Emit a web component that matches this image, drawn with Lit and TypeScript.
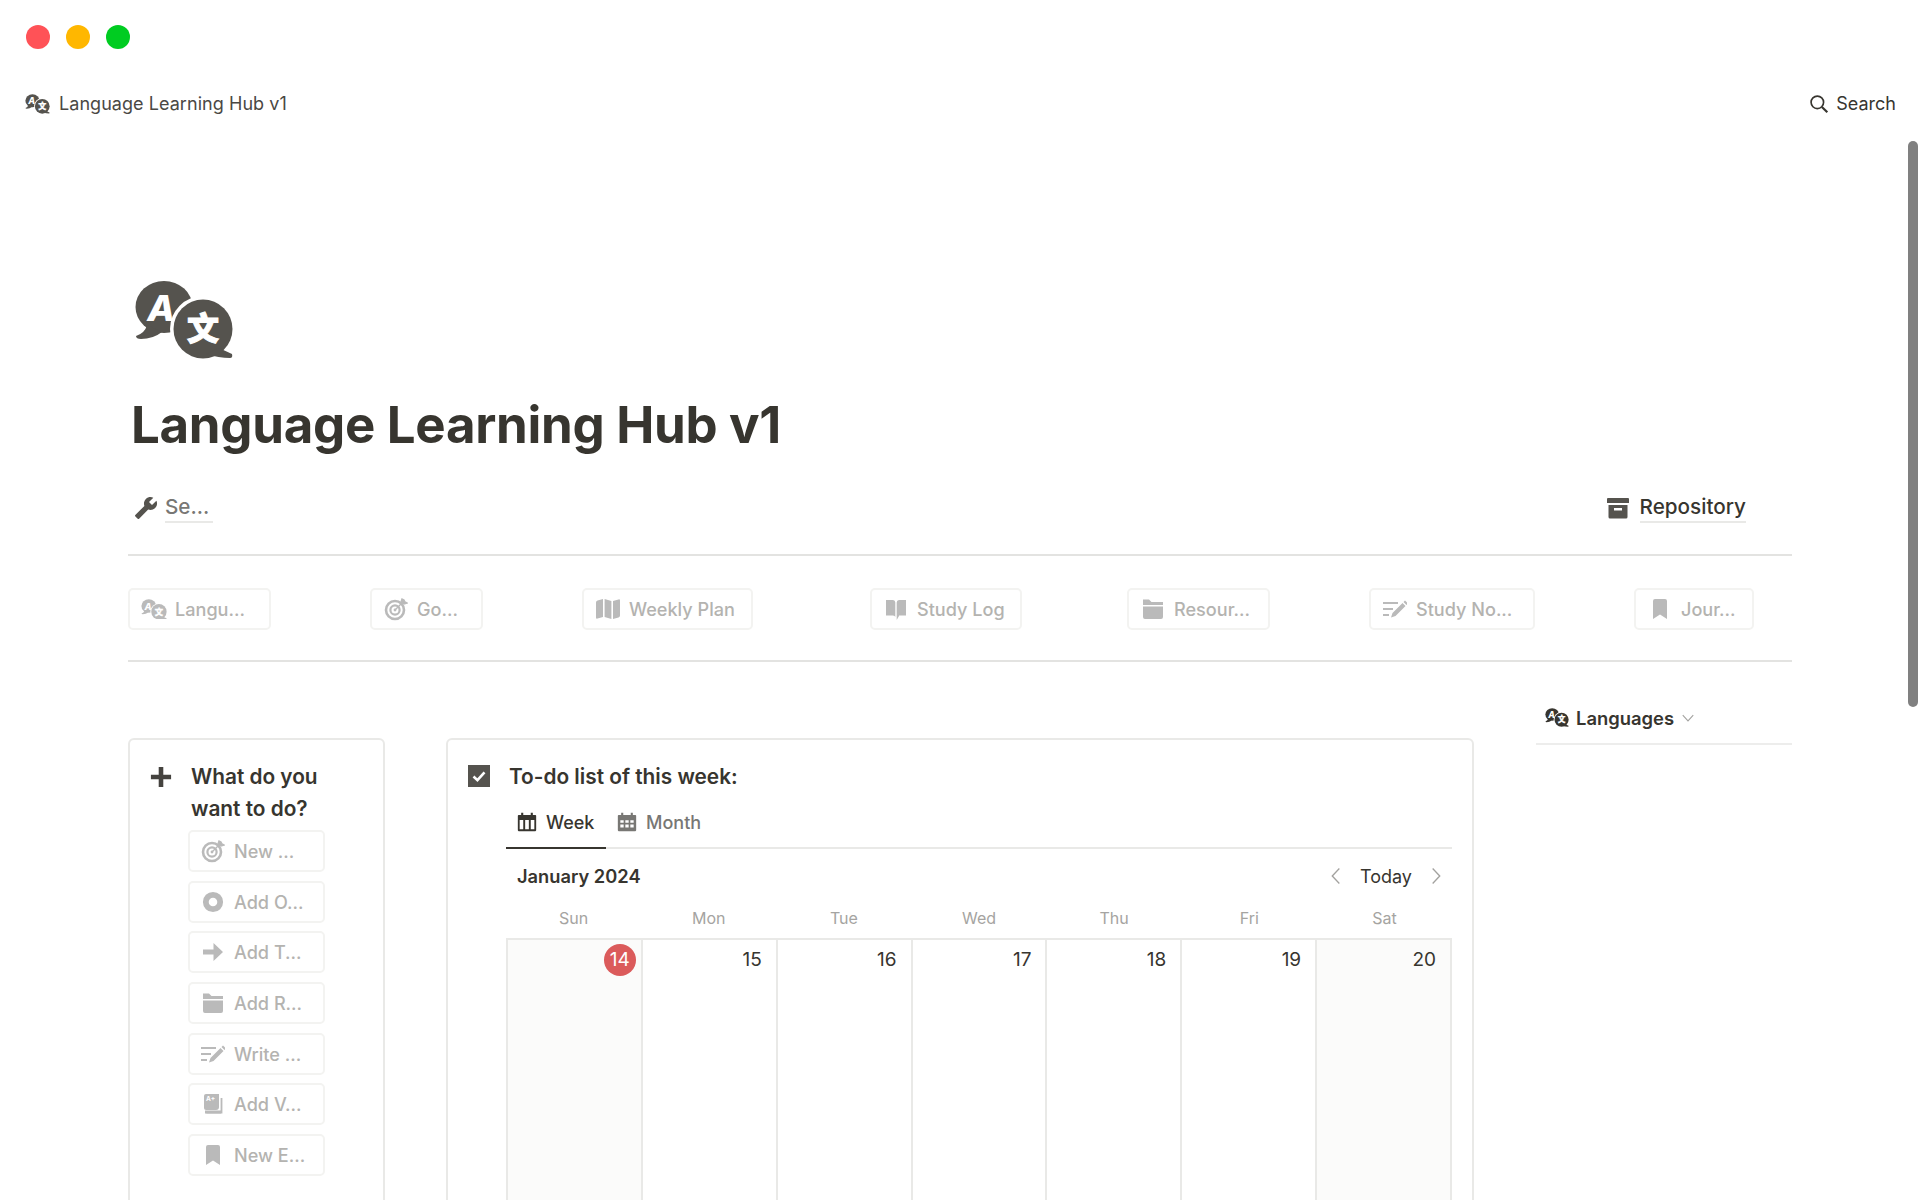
import { html, svg, LitElement, css } from "lit";
import { customElement } from "lit/decorators.js";

const icons: Record<string, unknown> = {
  target: svg`<circle cx="11" cy="13" r="9" fill="none" stroke="currentColor" stroke-width="2.6"/><circle cx="11" cy="13" r="4.6" fill="none" stroke="currentColor" stroke-width="2.2"/><circle cx="11" cy="13" r="1.4" fill="currentColor"/><path d="M11 13 19 5M17 5l1-3 2 1 1 2 2 1-3 1z" fill="currentColor" stroke="currentColor" stroke-width="1.4"/>`,
  map: svg`<path d="M0 5.5Q0 4 1.5 3.6L7 2V20L1.5 21.6Q0 22 0 20.5ZM8.6 2 15.4 4V22L8.6 20ZM17 4 22.5 2.4Q24 2 24 3.5V18.500Q24 20 22.500 20.400L17 22Z" fill="currentColor"/>`,
  book: svg`<path d="M2 3H9Q11.300 3 11.300 5.500V20Q11 18.500 9 18.500H2ZM22 3H15Q12.700 3 12.700 5.500V23L15 19V18.500H22Z" fill="currentColor"/>`,
  folder: svg`<path d="M2 2.500H8L10.500 5H22V8H2ZM2 9.500H22V20Q22 22 20 22H4Q2 22 2 20Z" fill="currentColor"/>`,
  edit: svg`<path d="M0 6H15M0 12H10M0 18H6" fill="none" stroke="currentColor" stroke-width="2"/><path d="M8 20.500 9.500 16 19.500 6 22.500 9 12.500 19ZM20.500 5 22 3.500 25 6.500 23.500 8Z" fill="currentColor"/>`,
  bookmark: svg`<path d="M5 4Q5 2 7 2H17Q19 2 19 4V22L12 17.500 5 22Z" fill="currentColor"/>`,
  ring: svg`<circle cx="12" cy="12" r="7.200" fill="none" stroke="currentColor" stroke-width="5.800"/>`,
  arrow: svg`<path d="M2 9.500H12.500V3L22 12 12.500 21V14.500H2Z" fill="currentColor"/>`,
  vocab: svg`<path d="M3 4Q3 2 5 2H18V15Q18 18 15 18H5Q3 18 3 16Z" fill="currentColor"/><text x="5" y="9" font-family="Inter, sans-serif" font-size="6.500" font-weight="700" fill="#fff">A+</text><path d="M20.500 6V20.500H4" fill="none" stroke="currentColor" stroke-width="1.800"/><path d="M4 18.500H20V21.500H6Q4 21.500 4 19.500Z" fill="currentColor"/>`,
  week: svg`<path d="M5 1H7.500V3.500H16.500V1H19V3.500H22Q23 3.500 23 4.500V22Q23 23 22 23H2Q1 23 1 22V4.500Q1 3.500 2 3.500H5ZM3.200 9.500V20.800H7.500V9.500ZM9.800 9.500V20.800H14.200V9.500ZM16.500 9.500V20.800H20.800V9.500Z" fill="currentColor" fill-rule="evenodd"/>`,
  month: svg`<path d="M5 1H7.500V3.500H16.500V1H19V3.500H22Q23 3.500 23 4.500V22Q23 23 22 23H2Q1 23 1 22V4.500Q1 3.500 2 3.500H5ZM4 10V13H8V10ZM10 10V13H14V10ZM16 10V13H20V10ZM4 15V18.500H8V15ZM10 15V18.500H14V15ZM16 15V18.500H20V15Z" fill="currentColor" fill-rule="evenodd"/>`,
  archive: svg`<path d="M1 3Q1 2 2 2H22Q23 2 23 3V7H1ZM2.500 9H21.500V21Q21.500 22.500 20 22.500H4Q2.500 22.500 2.500 21ZM8 12V14.500H16V12Z" fill="currentColor" fill-rule="evenodd"/>`,
  wrench: svg`<path transform="matrix(-1 0 0 1 24 0)" d="M22.700 19l-9.100-9.100c.9-2.300.4-5-1.500-6.900-2-2-5-2.400-7.400-1.300L9 6 6 9 1.600 4.700C.4 7.100.9 10.100 2.900 12.100c1.900 1.900 4.600 2.400 6.900 1.500l9.100 9.100c.4.400 1 .4 1.400 0l2.300-2.300c.5-.4.500-1.100.1-1.400z" fill="currentColor"/>`,
  search: svg`<circle cx="10" cy="10" r="7.500" fill="none" stroke="currentColor" stroke-width="2"/><path d="M15.500 15.500 22 22" fill="none" stroke="currentColor" stroke-width="2.600"/>`,
  plus: svg`<path d="M9.500 1H14.500V9.500H23V14.500H14.500V23H9.500V14.500H1V9.500H9.500Z" fill="currentColor"/>`,
  check: svg`<rect width="24" height="24" fill="#55534e"/><path d="M6 12.500 10.300 16.500 18 8" fill="none" stroke="#fff" stroke-width="2.800"/>`,
  left: svg`<path d="M16 3 7.500 12 16 21" fill="none" stroke="currentColor" stroke-width="1.600"/>`,
  right: svg`<path d="M8 3 16.500 12 8 21" fill="none" stroke="currentColor" stroke-width="1.600"/>`,
  down: svg`<path d="M3 7 12 17 21 7" fill="none" stroke="currentColor" stroke-width="1.800"/>`,
};

// two speech bubbles, used from 24px up to the 100px page icon
const langIcon = svg`
  <ellipse cx="30" cy="27" rx="28.500" ry="26" fill="currentColor"/>
  <path d="M13 45Q11 53 2 56Q2 59 7 59Q19 59 28 52Z" fill="currentColor"/>
  <text x="27" y="41" text-anchor="middle" font-family="Inter, sans-serif" font-size="36" font-weight="800" font-style="italic" fill="#fff">A</text>
  <circle cx="69" cy="49" r="33" fill="#fff"/>
  <circle cx="69" cy="49" r="29.500" fill="currentColor"/>
  <path d="M85 68 98 74Q99 78 96 78Q85 78 72 74Z" fill="currentColor"/>
  <text x="69" y="60" text-anchor="middle" font-family="'Noto Sans CJK SC', sans-serif" font-size="32" font-weight="900" fill="#fff" stroke="#fff" stroke-width="1">文</text>`;

const nav = [
  { icon: "lang", label: "Langu...", width: 143 },
  { icon: "target", label: "Go...", width: 113 },
  { icon: "map", label: "Weekly Plan", width: 171 },
  { icon: "book", label: "Study Log", width: 152 },
  { icon: "folder", label: "Resour...", width: 143 },
  { icon: "edit", label: "Study No...", width: 166 },
  { icon: "bookmark", label: "Jour...", width: 120 },
];

const actions = [
  { icon: "target", label: "New ..." },
  { icon: "ring", label: "Add O..." },
  { icon: "arrow", label: "Add T..." },
  { icon: "folder", label: "Add R..." },
  { icon: "edit", label: "Write ..." },
  { icon: "vocab", label: "Add V..." },
  { icon: "bookmark", label: "New E..." },
];

const days = [
  { name: "Sun", date: 14, today: true, weekend: true },
  { name: "Mon", date: 15 },
  { name: "Tue", date: 16 },
  { name: "Wed", date: 17 },
  { name: "Thu", date: 18 },
  { name: "Fri", date: 19 },
  { name: "Sat", date: 20, weekend: true },
];

@customElement("app-root")
export class AppRoot extends LitElement {
  static styles = css`
    :host {
      display: block;
      position: relative;
      height: 1200px;
      overflow: hidden;
      background: #fff;
      color: #37352f;
      font-family: Inter, "Noto Sans", sans-serif;
    }

    svg {
      display: block;
      flex: none;
    }

    .titlebar {
      display: flex;
      align-items: center;
      gap: 16px;
      height: 74px;
      padding-left: 26px;
    }

    .dot {
      width: 24px;
      height: 24px;
      border-radius: 50%;
    }

    .red {
      background: #ff5257;
    }

    .amber {
      background: #ffb700;
    }

    .green {
      background: #00cc21;
    }

    .topbar {
      display: flex;
      align-items: center;
      justify-content: space-between;
      height: 60px;
      padding: 0 24px 0 25px;
      font-size: 18px;
      line-height: 24px;
    }

    .crumb,
    .search {
      display: flex;
      align-items: center;
    }

    .crumb {
      gap: 9px;
      color: #4a4844;
      letter-spacing: 0.05px;
    }

    .crumb svg {
      color: #55534e;
    }

    .search {
      gap: 7px;
      color: #37352f;
    }

    .page {
      padding: 146px 128px 0;
    }

    .page-icon {
      margin-left: 6px;
      color: #55534e;
    }

    h1 {
      margin: 34px 0 0 3px;
      font-size: 51px;
      line-height: 62px;
      font-weight: 700;
      letter-spacing: -0.3px;
    }

    .links {
      display: flex;
      align-items: center;
      justify-content: space-between;
      height: 40px;
      margin-top: 32px;
      padding: 0 46px 0 6px;
      font-size: 20.7px;
      font-weight: 500;
    }

    .link {
      display: flex;
      align-items: center;
      gap: 7px;
      color: #55534e;
    }

    .link span {
      padding-bottom: 1px;
      border-bottom: 2px solid #e9e9e7;
      line-height: 26px;
    }

    .link .muted {
      width: 48px;
      color: #787774;
    }

    .link .dark {
      color: #37352f;
    }

    .link.repo {
      gap: 10px;
    }

    hr {
      height: 2px;
      margin: 26px 0 0;
      border: 0;
      background: #e3e3e1;
    }

    .nav {
      display: grid;
      grid-template-columns: 242px 212px 288px 257px 242px 265px 120px;
      margin-top: 32px;
    }

    .btn {
      display: flex;
      align-items: center;
      box-sizing: border-box;
      height: 42px;
      padding-left: 11px;
      border: 2px solid #f3f3f1;
      border-radius: 5px;
      color: #b4b3b0;
      font-size: 18.1px;
      font-weight: 500;
      white-space: nowrap;
    }

    .btn .slot {
      display: flex;
      justify-content: center;
      flex: none;
      width: 26px;
      margin-right: 8px;
      color: #bababa;
    }

    .nav + hr {
      margin-top: 30px;
    }

    .main {
      display: flex;
      align-items: flex-start;
      margin-top: 38px;
    }

    .card {
      box-sizing: border-box;
      margin-top: 38px;
      border: 2px solid #e9e9e7;
      border-radius: 6px;
    }

    .actions-card {
      flex: none;
      width: 257px;
      padding: 21px 0 50px;
    }

    .card-head {
      display: flex;
      align-items: flex-start;
      font-size: 20.8px;
      line-height: 32px;
      font-weight: 600;
    }

    .actions-card .card-head {
      gap: 19px;
      padding-left: 20px;
    }

    .actions-card .card-head svg {
      margin-top: 5px;
      color: #45433f;
    }

    .actions {
      display: flex;
      flex-direction: column;
      gap: 8.7px;
      width: 137px;
      margin: 5px 0 0 58px;
    }

    .actions .btn {
      padding-left: 10px;
    }

    .week-card {
      flex: none;
      width: 1028px;
      margin-left: 61px;
      padding: 21px 20px 0 20px;
    }

    .week-card .card-head {
      gap: 19px;
    }

    .week-card .card-head svg {
      margin-top: 4px;
    }

    .cal {
      margin: 4px 0 0 38px;
    }

    .tabs {
      display: flex;
      height: 50px;
      border-bottom: 2px solid #e9e9e7;
    }

    .tab {
      display: flex;
      align-items: center;
      gap: 9px;
      box-sizing: border-box;
      height: 52px;
      padding: 0 11px 2px;
      font-size: 18px;
      font-weight: 500;
      color: #787774;
    }

    .tab.on {
      width: 100px;
      padding-bottom: 0;
      border-bottom: 2px solid #37352f;
      color: #37352f;
    }

    .cal-head {
      display: flex;
      align-items: center;
      justify-content: space-between;
      height: 44px;
      margin-top: 5px;
      padding: 0 6px 0 11px;
      font-size: 18.3px;
    }

    .cal-head strong {
      font-weight: 600;
    }

    .pager {
      display: flex;
      align-items: center;
      gap: 14px;
      font-size: 18px;
      font-weight: 400;
      color: #37352f;
    }

    .pager svg {
      color: #a3a29f;
    }

    .names,
    .cells {
      display: grid;
      grid-template-columns: repeat(7, 1fr);
    }

    .names {
      height: 40px;
      align-items: center;
      text-align: center;
      font-size: 16px;
      color: #a5a4a1;
    }

    .cells {
      height: 320px;
      border-top: 2px solid #e9e9e7;
      border-left: 2px solid #e9e9e7;
    }

    .cell {
      display: flex;
      justify-content: flex-end;
      box-sizing: border-box;
      padding: 4px 14px 0 0;
      border-right: 2px solid #e9e9e7;
      font-size: 19px;
      line-height: 32px;
      color: #37352f;
    }

    .cell.weekend {
      background: #fbfbfa;
    }

    .today {
      width: 32px;
      height: 32px;
      margin-right: -9px;
      border-radius: 50%;
      background: #db5b5b;
      color: #fff;
      text-align: center;
    }

    .side {
      flex: none;
      box-sizing: border-box;
      width: 256px;
      margin-left: auto;
      padding: 0 0 7px 9px;
      border-bottom: 2px solid #ededec;
    }

    .side-tab {
      display: flex;
      align-items: center;
      height: 36px;
      font-size: 18.4px;
      font-weight: 600;
    }

    .side-tab .lang {
      margin-right: 7px;
      color: #37352f;
    }

    .side-tab .chev {
      margin-left: 7px;
      color: #a3a29f;
    }

    .scrollbar {
      position: absolute;
      top: 141px;
      left: 1908px;
      width: 10px;
      height: 566px;
      border-radius: 5px;
      background: #808080;
    }
  `;

  icon(name: string, size = 24) {
    if (name === "lang") {
      return html`<svg width=${size} height=${size * 0.8} viewBox="0 0 100 80">${langIcon}</svg>`;
    }
    return html`<svg width=${size} height=${size} viewBox="0 0 24 24">${icons[name]}</svg>`;
  }

  button(item: { icon: string; label: string; width?: number }) {
    const size = item.icon === "lang" ? 26 : 24;
    return html`<div class="btn" style=${item.width ? `width:${item.width}px` : ""}>
      <span class="slot">${this.icon(item.icon, size)}</span>${item.label}
    </div>`;
  }

  render() {
    return html`
      <div class="titlebar">
        <span class="dot red"></span>
        <span class="dot amber"></span>
        <span class="dot green"></span>
      </div>
      <div class="topbar">
        <div class="crumb">${this.icon("lang", 25)}Language Learning Hub v1</div>
        <div class="search">${this.icon("search", 20)}Search</div>
      </div>

      <div class="page">
        <div class="page-icon">
          <svg width="100" height="80" viewBox="0 0 100 80">${langIcon}</svg>
        </div>
        <h1>Language Learning Hub v1</h1>
        <div class="links">
          <div class="link">${this.icon("wrench", 24)}<span class="muted">Se...</span></div>
          <div class="link repo">${this.icon("archive", 24)}<span class="dark">Repository</span></div>
        </div>
        <hr />
        <div class="nav">${nav.map((n) => this.button(n))}</div>
        <hr />

        <div class="main">
          <div class="card actions-card">
            <div class="card-head">
              ${this.icon("plus", 22)}
              <div>What do you<br />want to do?</div>
            </div>
            <div class="actions">${actions.map((a) => this.button(a))}</div>
          </div>

          <div class="card week-card">
            <div class="card-head">${this.icon("check", 22)}To-do list of this week:</div>
            <div class="cal">
              <div class="tabs">
                <div class="tab on">${this.icon("week", 20)}Week</div>
                <div class="tab">${this.icon("month", 20)}Month</div>
              </div>
              <div class="cal-head">
                <strong>January 2024</strong>
                <div class="pager">
                  ${this.icon("left", 20)}Today${this.icon("right", 20)}
                </div>
              </div>
              <div class="names">${days.map((d) => html`<div>${d.name}</div>`)}</div>
              <div class="cells">
                ${days.map(
                  (d) => html`<div class="cell ${d.weekend ? "weekend" : ""}">
                    <span class=${d.today ? "today" : ""}>${d.date}</span>
                  </div>`
                )}
              </div>
            </div>
          </div>

          <div class="side">
            <div class="side-tab">
              <span class="lang">${this.icon("lang", 24)}</span>Languages
              <span class="chev">${this.icon("down", 14)}</span>
            </div>
          </div>
        </div>
      </div>

      <div class="scrollbar"></div>
    `;
  }
}
